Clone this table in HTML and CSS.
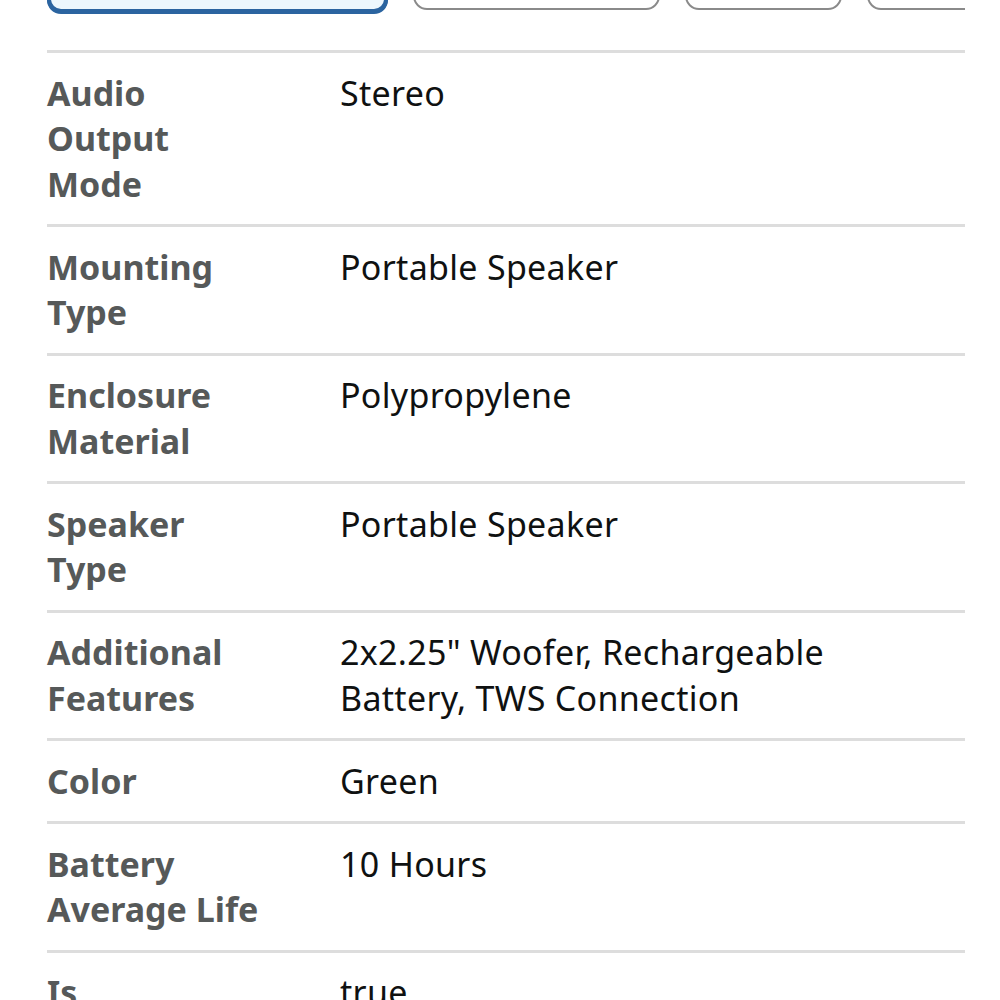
FILE: index.html
```html
<!DOCTYPE html>
<html>
<head>
<meta charset="utf-8">
<link rel="stylesheet" href="styles.css">
</head>
<body>
<div class="page">
  <div class="swatches">
    <div class="swatch selected" style="width:341px"></div>
    <div class="swatch" style="width:247px"></div>
    <div class="swatch" style="width:157px"></div>
    <div class="swatch" style="width:160px"></div>
  </div>
  <div class="specs">
    <div class="row"><div class="label">Audio Output Mode</div><div class="value">Stereo</div></div>
    <div class="row"><div class="label">Mounting Type</div><div class="value">Portable Speaker</div></div>
    <div class="row"><div class="label">Enclosure Material</div><div class="value">Polypropylene</div></div>
    <div class="row"><div class="label">Speaker Type</div><div class="value">Portable Speaker</div></div>
    <div class="row"><div class="label">Additional Features</div><div class="value">2x2.25" Woofer, Rechargeable Battery, TWS Connection</div></div>
    <div class="row"><div class="label">Color</div><div class="value">Green</div></div>
    <div class="row"><div class="label">Battery Average Life</div><div class="value">10 Hours</div></div>
    <div class="row"><div class="label">Is</div><div class="value">true</div></div>
  </div>
</div>
</body>
</html>
```
FILE: styles.css
```css
html, body {
  margin: 0;
  padding: 0;
  background: #fff;
  overflow: hidden;
}
.page {
  margin-left: 47px;
  width: 918px;
  font-family: "Noto Sans", "Open Sans", sans-serif;
  font-size: 34px;
  line-height: 45.5px;
}
.swatches {
  display: flex;
  gap: 25px;
  overflow: hidden;
  height: 60px;
  margin-top: -46px;
}
.swatch {
  flex: none;
  height: 56px;
  box-sizing: border-box;
  border: 2px solid #8a8a8a;
  border-radius: 14px;
  background: #fff;
}
.swatch.selected {
  border: 4px solid #2b64a0;
  background: #edf7fd;
  height: 59px;
  box-shadow: 0 1px 0 #2b64a0;
}
.specs {
  margin-top: 36px;
}
.row {
  display: grid;
  grid-template-columns: 225px 1fr;
  column-gap: 68px;
  border-top: 3px solid #dddddd;
  padding: 17.5px 0 17px;
}
.label {
  font-weight: 700;
  color: #565959;
}
.value {
  color: #0f1111;
  max-width: 560px;
  letter-spacing: 0.3px;
}
```
